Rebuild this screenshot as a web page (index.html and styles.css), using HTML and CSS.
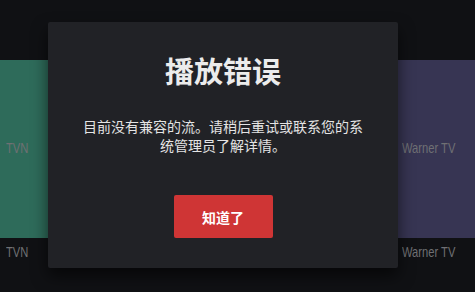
FILE: index.html
```html
<!DOCTYPE html>
<html lang="zh-CN">
<head>
<meta charset="utf-8">
<title>播放错误</title>
<link rel="stylesheet" href="styles.css">
</head>
<body>
<div class="page">
  <div class="row">
    <div class="channel channel-left">
      <div class="card card-green"><div class="card-label">TVN</div></div>
      <div class="caption">TVN</div>
    </div>
    <div class="channel channel-right">
      <div class="card card-purple"><div class="card-label">Warner TV</div></div>
      <div class="caption">Warner TV</div>
    </div>
  </div>
  <div class="dialog" role="dialog">
    <h1 class="dialog-title">播放错误</h1>
    <p class="dialog-text">目前没有兼容的流。请稍后重试或联系您的系统管理员了解详情。</p>
    <button class="dialog-button">知道了</button>
  </div>
</div>
</body>
</html>
```
FILE: styles.css
```css
html, body {
  margin: 0;
  padding: 0;
  background: #101114;
}
.page {
  position: relative;
  width: 475px;
  height: 292px;
  overflow: hidden;
  background: #101114;
  font-family: "Noto Sans CJK SC", "Noto Sans", sans-serif;
}
.row {
  display: flex;
  justify-content: space-between;
  padding-top: 60px;
}
.channel {
  display: flex;
  flex-direction: column;
}
.channel-left { width: 160px; }
.channel-right { width: 77px; }
.card {
  height: 178px;
  box-sizing: border-box;
  padding-top: 80px;
}
.card-green { background: #2e6b5a; }
.card-purple { background: #373553; }
.channel-left .card-label,
.channel-left .caption { margin-left: 6px; }
.channel-right .card-label,
.channel-right .caption { margin-left: 4px; }
.card-label, .caption {
  font-family: "Liberation Sans", sans-serif;
  font-size: 14.5px;
  line-height: 16px;
  color: #6f7073;
  white-space: nowrap;
  transform: scaleX(0.77);
  transform-origin: left center;
}
.caption {
  margin-top: 6px;
}
.dialog {
  position: absolute;
  left: 48px;
  top: 22px;
  width: 350px;
  height: 246px;
  box-sizing: border-box;
  padding: 28px 32px 0;
  background: #212226;
  border-radius: 2px;
  box-shadow: 0 8px 16px rgba(0, 0, 0, 0.6);
  display: flex;
  flex-direction: column;
  align-items: center;
  text-align: center;
}
.dialog-title {
  margin: 0;
  font-size: 29px;
  line-height: 40px;
  font-weight: 700;
  color: #ececec;
}
.dialog-text {
  margin: 27px 0 0;
  font-size: 14px;
  line-height: 19px;
  color: #e4e4e4;
}
.dialog-button {
  margin-top: 40px;
  width: 99px;
  height: 43px;
  border: none;
  border-radius: 2px;
  background: #cf3535;
  color: #ffffff;
  font-family: "Noto Sans CJK SC", sans-serif;
  font-size: 14px;
  font-weight: 700;
  padding: 0;
}
```
